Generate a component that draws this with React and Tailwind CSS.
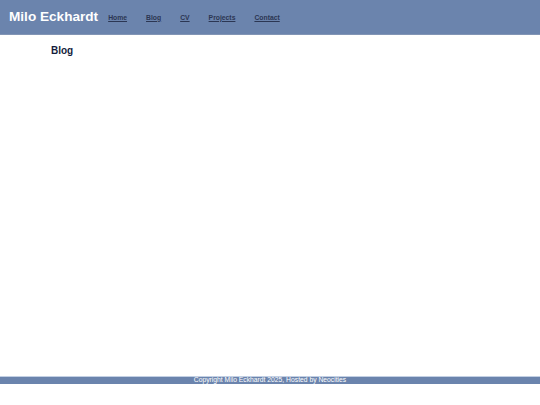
import React from "react";

const links = ["Home", "Blog", "CV", "Projects", "Contact"];

const App = () => {
  return (
    <div className="min-h-[405px] flex flex-col bg-white font-['Liberation_Sans',Arial,sans-serif]">
      {/* Header */}
      <header className="h-[35px] bg-[#6b84ad] border-b border-[#8295b5] flex items-center pl-[9px]">
        <h1 className="text-[13.6px] font-bold text-white leading-none mr-[10px] -mt-[1px]">
          Milo Eckhardt
        </h1>
        <nav className="flex gap-[19px] mt-[2px]">
          {links.map((link) => (
            <a
              key={link}
              href="#"
              className="text-[6.8px] font-bold text-[#2b3653] underline leading-none"
            >
              {link}
            </a>
          ))}
        </nav>
      </header>

      {/* Content */}
      <main className="h-[341px] pl-[51px] pt-[11px]">
        <h2 className="text-[10px] font-bold text-[#141c3c] leading-none">Blog</h2>
      </main>

      {/* Footer */}
      <footer className="h-[8px] bg-[#6b84ad] border-t border-[#c3d0e4] flex items-center justify-center">
        <p className="text-[6.75px] text-white leading-none">
          Copyright Milo Eckhardt 2025, Hosted by Neocities
        </p>
      </footer>
    </div>
  );
};

export default App;
